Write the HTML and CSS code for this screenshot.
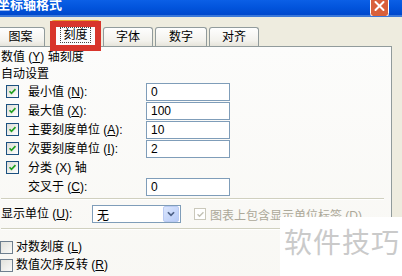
FILE: index.html
```html
<!DOCTYPE html>
<html lang="zh-CN">

<head>
  <meta charset="UTF-8">
  <meta name="viewport" content="width=device-width, initial-scale=1.0">
  <title>坐标轴格式</title>
  <link rel="stylesheet" href="styles.css">
</head>

<body>
  <div class="window">
    <header class="titlebar">
      <h1 class="title">坐标轴格式</h1>
      <button class="close" aria-label="关闭">
        <svg viewBox="0 0 19 18" width="19" height="18">
          <rect x="0.5" y="-4" width="18" height="21.5" rx="3" fill="#d9603b" stroke="#fff" stroke-width="1"></rect>
          <path d="M5.5 3 L13.5 11 M13.5 3 L5.5 11" stroke="#fff" stroke-width="2" stroke-linecap="round"></path>
        </svg>
      </button>
    </header>

    <nav class="tabs">
      <span class="tab tab-first">图案</span>
      <span class="tab tab-active"><span class="focus">刻度</span></span>
      <span class="tab tab-font">字体</span>
      <span class="tab tab-number">数字</span>
      <span class="tab">对齐</span>
      <span class="marker"></span>
    </nav>

    <section class="panel">
      <p class="heading">数值 (<u>Y</u>) 轴刻度</p>
      <p class="subheading">自动设置</p>

      <div class="row">
        <span class="cb"><svg viewBox="0 0 13 13"><path d="M3 6.2 L5.3 8.6 L10 3.8" fill="none" stroke="#21a121" stroke-width="2"></path></svg></span>
        <label class="label">最小值 (<u>N</u>):</label>
        <span class="field">0</span>
      </div>
      <div class="row">
        <span class="cb"><svg viewBox="0 0 13 13"><path d="M3 6.2 L5.3 8.6 L10 3.8" fill="none" stroke="#21a121" stroke-width="2"></path></svg></span>
        <label class="label">最大值 (<u>X</u>):</label>
        <span class="field">100</span>
      </div>
      <div class="row">
        <span class="cb"><svg viewBox="0 0 13 13"><path d="M3 6.2 L5.3 8.6 L10 3.8" fill="none" stroke="#21a121" stroke-width="2"></path></svg></span>
        <label class="label">主要刻度单位 (<u>A</u>):</label>
        <span class="field">10</span>
      </div>
      <div class="row">
        <span class="cb"><svg viewBox="0 0 13 13"><path d="M3 6.2 L5.3 8.6 L10 3.8" fill="none" stroke="#21a121" stroke-width="2"></path></svg></span>
        <label class="label">次要刻度单位 (<u>I</u>):</label>
        <span class="field">2</span>
      </div>
      <div class="row">
        <span class="cb"><svg viewBox="0 0 13 13"><path d="M3 6.2 L5.3 8.6 L10 3.8" fill="none" stroke="#21a121" stroke-width="2"></path></svg></span>
        <label class="label">分类 (X) 轴</label>
      </div>
      <div class="row row-indent">
        <label class="label">交叉于 (<u>C</u>):</label>
        <span class="field">0</span>
      </div>

      <hr class="rule">

      <div class="units">
        <label class="units-label">显示单位 (<u>U</u>):</label>
        <span class="select">
          <span>无</span>
          <span class="select-button">
            <svg viewBox="0 0 16 16" width="16" height="16"><path d="M4.5 6 L8 9.5 L11.5 6" fill="none" stroke="#4d6185" stroke-width="2"></path></svg>
          </span>
        </span>
        <span class="cb cb-disabled"><svg viewBox="0 0 13 13"><path d="M3 6.2 L5.3 8.6 L10 3.8" fill="none" stroke="#c2c1b4" stroke-width="1.6"></path></svg></span>
        <span class="disabled-label">图表上包含显示单位标签 (<u>D</u>)</span>
      </div>

      <hr class="rule rule-low">

      <div class="option"><span class="cb cb-plain"></span><label>对数刻度 (<u>L</u>)</label></div>
      <div class="option"><span class="cb cb-plain"></span><label>数值次序反转 (<u>R</u>)</label></div>
      <div class="option"><span class="cb cb-plain"></span><label>分类 (X) 轴交叉于最大值 (<u>M</u>)</label></div>
    </section>
  </div>

  <div class="watermark">软件技巧</div>
</body>

</html>
```

FILE: styles.css
```css
body {
  margin: 0;
  width: 402px;
  height: 276px;
  overflow: hidden;
  position: relative;
  background: #eeecdf;
  font-family: "Liberation Sans", "Noto Sans CJK SC", sans-serif;
  font-size: 12px;
  color: #000;
}

p {
  margin: 0;
}

u {
  text-decoration-thickness: 1px;
  text-underline-offset: 1px;
}

.window {
  margin-left: -6px;
  width: 408px;
}

/* title bar */
.titlebar {
  display: flex;
  justify-content: space-between;
  align-items: flex-start;
  height: 15px;
  background: linear-gradient(#0b5fe6, #0254dc 50%, #0048cc);
  border-bottom: 2px solid #3b78d9;
}

.title {
  margin: -3px 0 0 3px;
  font-size: 13px;
  line-height: 16px;
  font-weight: 700;
  color: #fff;
  letter-spacing: 0;
}

.close {
  margin-right: 13px;
  padding: 0;
  border: none;
  background: none;
  width: 19px;
  height: 16px;
  overflow: hidden;
}

.close svg {
  display: block;
  margin-top: -1px;
}

/* tabs */
.tabs {
  position: relative;
  display: flex;
  align-items: flex-end;
  height: 29px;
  padding-left: 2px;
}

.tab {
  box-sizing: border-box;
  display: grid;
  place-items: center;
  width: 50px;
  height: 19px;
  margin-right: 2px;
  border: 1px solid #919b9c;
  border-bottom: none;
  border-radius: 3px 3px 0 0;
  background: linear-gradient(#fefefe, #f3f2ed 70%, #e6e4da);
  line-height: 16px;
}

.tab-first {
  width: 49px;
  margin-right: 6px;
}

.tab-active {
  position: relative;
  z-index: 1;
  width: 49px;
  height: 27px;
  margin-right: 3px;
  margin-bottom: -1px;
  border-top: 2px solid #e8a030;
  background: #fcfcfe;
}

.focus {
  padding: 0 2px;
  border: 1px dotted #444;
  line-height: 14px;
}

.tab-number {
  width: 52px;
}

/* annotation box drawn over the selected tab */
.marker {
  position: absolute;
  left: 56px;
  top: 4px;
  width: 51px;
  height: 30px;
  box-sizing: border-box;
  border: 6px solid #d8352c;
  z-index: 2;
}

/* tab page */
.panel {
  box-sizing: border-box;
  width: 398px;
  height: 260px;
  padding-left: 6px;
  border: 1px solid #919b9c;
  background: linear-gradient(#fcfcfb, #f8f7f3);
}

.heading {
  margin-top: 2px;
  line-height: 16px;
}

.subheading {
  margin-top: 1px;
  line-height: 16px;
}

.row {
  display: flex;
  align-items: center;
  height: 19px;
  padding-left: 5px;
}

.row-indent {
  padding-left: 27px;
}

.cb {
  box-sizing: border-box;
  flex: none;
  width: 13px;
  height: 13px;
  border: 1px solid #1c5180;
  background: linear-gradient(135deg, #dcdcd6, #fff);
}

.cb svg {
  display: block;
  width: 11px;
  height: 11px;
}

.row .cb {
  margin-right: 9px;
}

.label {
  flex: 0 0 118px;
  line-height: 16px;
}

.field {
  box-sizing: border-box;
  width: 84px;
  height: 18px;
  padding-left: 4px;
  border: 1px solid #7f9db9;
  background: #fff;
  line-height: 16px;
}

.rule {
  width: 383px;
  height: 0;
  margin: 2px 0 0 0;
  border: none;
  border-top: 1px solid #d0d0bf;
  border-bottom: 1px solid #fff;
}

.rule-low {
  margin-top: 5px;
}

.units {
  display: flex;
  align-items: center;
  height: 18px;
  margin-top: 5px;
}

.units-label {
  flex: 0 0 91px;
  line-height: 16px;
}

.select {
  box-sizing: border-box;
  display: flex;
  justify-content: space-between;
  align-items: center;
  width: 89px;
  height: 18px;
  padding: 1px 1px 1px 4px;
  border: 1px solid #7f9db9;
  background: #fff;
}

.select-button {
  box-sizing: border-box;
  width: 16px;
  height: 16px;
  border: 1px solid #bacbf3;
  border-radius: 2px;
  background: linear-gradient(135deg, #dbe6fd, #b7cbf7);
}

.select-button svg {
  display: block;
  width: 14px;
  height: 14px;
}

.cb-disabled {
  width: 12px;
  height: 12px;
  margin: 0 4px 0 13px;
  border-color: #cac8bb;
  background: #fff;
}

.disabled-label {
  color: #aca899;
  white-space: nowrap;
}

.option {
  display: flex;
  align-items: center;
  gap: 3px;
  height: 18px;
  margin-left: -1px;
}

.rule-low + .option {
  margin-top: 8px;
}

.cb-plain {
  border-color: #6e7f8f;
  background: linear-gradient(135deg, #e2e2dc, #fafaf8);
}

.option label {
  line-height: 16px;
  white-space: nowrap;
}

/* watermark pasted over the screenshot */
.watermark {
  position: absolute;
  left: 280px;
  top: 217px;
  width: 122px;
  height: 59px;
  box-sizing: border-box;
  padding: 6px 0 0 4px;
  background: #fff;
  color: #cacaca;
  font-family: "Noto Sans CJK SC", sans-serif;
  font-size: 28px;
  line-height: 36px;
  letter-spacing: 1px;
  white-space: nowrap;
}
```
